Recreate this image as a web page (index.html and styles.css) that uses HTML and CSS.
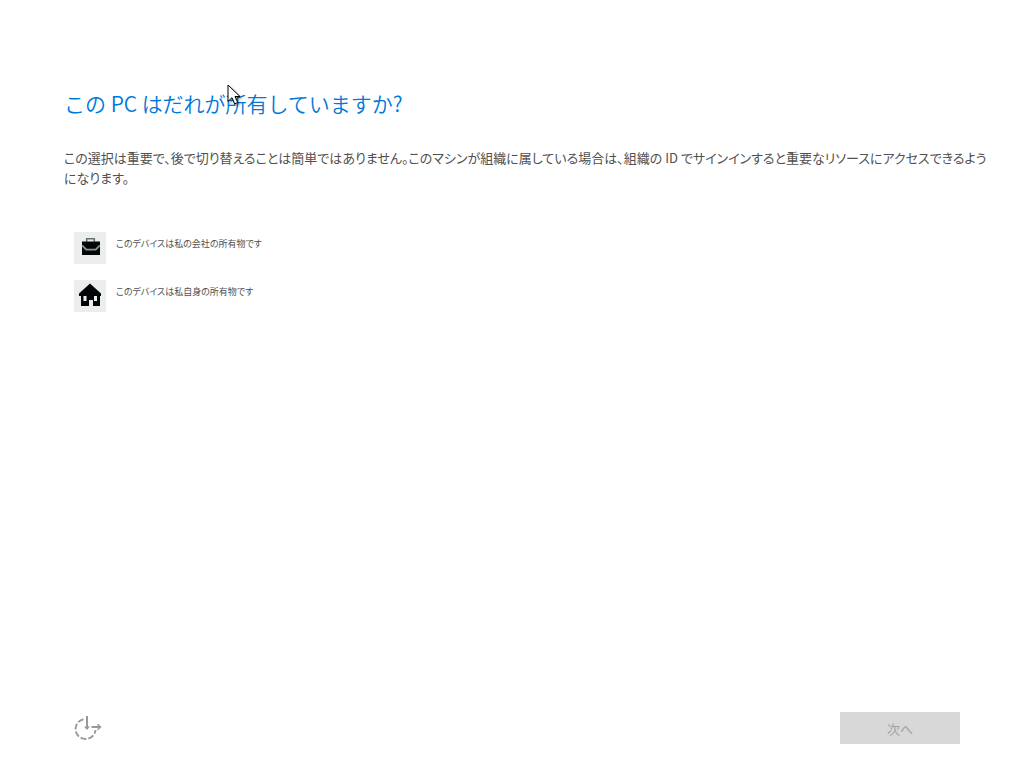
FILE: index.html
```
<!DOCTYPE html>
<html lang="ja">
<head>
    <meta charset="UTF-8">
    <meta name="viewport" content="width=device-width, initial-scale=1.0">
    <title>この PC はだれが所有していますか?</title>
    <link rel="stylesheet" href="styles.css">
</head>
<body>
    <main class="content">
        <h1>この PC はだれが所有していますか?</h1>
        <p class="description">この選択は重要で、後で切り替えることは簡単ではありません。このマシンが組織に属している場合は、組織の ID でサインインすると重要なリソースにアクセスできるようになります。</p>

        <div class="options">
            <button type="button" class="option">
                <svg class="option-icon" viewBox="0 0 32 32" aria-hidden="true">
                    <path d="M12.7 10V6.7h7.6V10" fill="none" stroke="#667074" stroke-width="1.5"/>
                    <path d="M8 9.5h18v5l-4.500 3.800h-9L8 14.500z" fill="#020607"/>
                    <path d="M8 14.500l3.800 3.800h10.400l3.800-3.800V23H8z" fill="#020607"/>
                    <path d="M8.200 13.400l4 4h9.600l4-4" fill="none" stroke="#8b9496" stroke-width="1.5"/>
                </svg>
                <span class="option-text">このデバイスは私の会社の所有物です</span>
            </button>
            <button type="button" class="option">
                <svg class="option-icon" viewBox="0 0 32 32" aria-hidden="true">
                    <path d="M16 3.500L27 13.500v2.500h-1V26h-7v-6h-4v6H7V16H5v-2.500z" fill="#020607"/>
                    <path d="M9.500 16h3v5h-3zM20 16h3v5h-3z" fill="#eceeee"/>
                </svg>
                <span class="option-text">このデバイスは私自身の所有物です</span>
            </button>
        </div>
    </main>

    <footer class="footer">
        <button type="button" class="btn-access" aria-label="コンピューターの簡単操作">
            <svg viewBox="0 0 32 32" aria-hidden="true">
                <path d="M11.500 7.200A10 10 0 1 0 23.500 18" fill="none" stroke="#9c9c9c" stroke-width="2" stroke-dasharray="6 2"/>
                <path d="M15 4v12M19.500 15H28" fill="none" stroke="#999" stroke-width="2"/>
                <path d="M12 14.500h6L15 18z" fill="#999"/>
                <path d="M25.500 12.200l3 2.800-3 2.800" fill="none" stroke="#999" stroke-width="1.500"/>
            </svg>
        </button>
        <button type="button" class="btn-next" disabled>次へ</button>
    </footer>

    <svg class="cursor" viewBox="0 0 16 24" aria-hidden="true">
        <path d="M1 1v16.500l4-3.800 2.700 6.100 3-1.300L8 12.500h5z" fill="#fff" stroke="#000"/>
    </svg>
</body>
</html>
```
FILE: styles.css
```
* {
    box-sizing: border-box;
}
body {
    display: flex;
    flex-direction: column;
    min-height: 100vh;
    margin: 0;
    padding: 88px 0 24px 64px;
    background-color: white;
    color: #505050;
    font-family: "Noto Sans CJK JP", sans-serif;
    font-feature-settings: "palt";
}
button {
    border: none;
    padding: 0;
    color: inherit;
    font-family: inherit;
    font-feature-settings: inherit;
}
.content {
    flex: 1;
    padding-right: 32px;
}
h1 {
    margin: 0;
    color: #0078d7;
    font-size: 21px;
    font-weight: 350;
    line-height: 30px;
    font-feature-settings: normal;
}
.description {
    margin: 30px 0 0;
    font-size: 13px;
    line-height: 20px;
}
.options {
    display: flex;
    flex-direction: column;
    align-items: flex-start;
    gap: 16px;
    margin-top: 44px;
    padding-left: 10px;
}
.option {
    display: flex;
    gap: 10px;
    background: none;
    text-align: left;
    cursor: pointer;
}
.option-icon {
    width: 32px;
    height: 32px;
    background-color: #eceeee;
}
.option-text {
    padding-top: 4px;
    font-size: 9px;
    line-height: 16px;
}
.footer {
    display: flex;
    justify-content: space-between;
    align-items: center;
    padding: 0 64px 0 8px;
}
.btn-access {
    width: 32px;
    height: 32px;
    background: none;
}
.btn-access svg {
    display: block;
}
.btn-next {
    width: 120px;
    height: 32px;
    background-color: #d8d8d8;
    color: #a0a0a0;
    font-size: 13px;
}
.cursor {
    position: absolute;
    top: 84px;
    left: 227px;
    width: 16px;
    height: 24px;
    filter: drop-shadow(2px 2px 1px rgba(0,0,0,0.35));
}
```
